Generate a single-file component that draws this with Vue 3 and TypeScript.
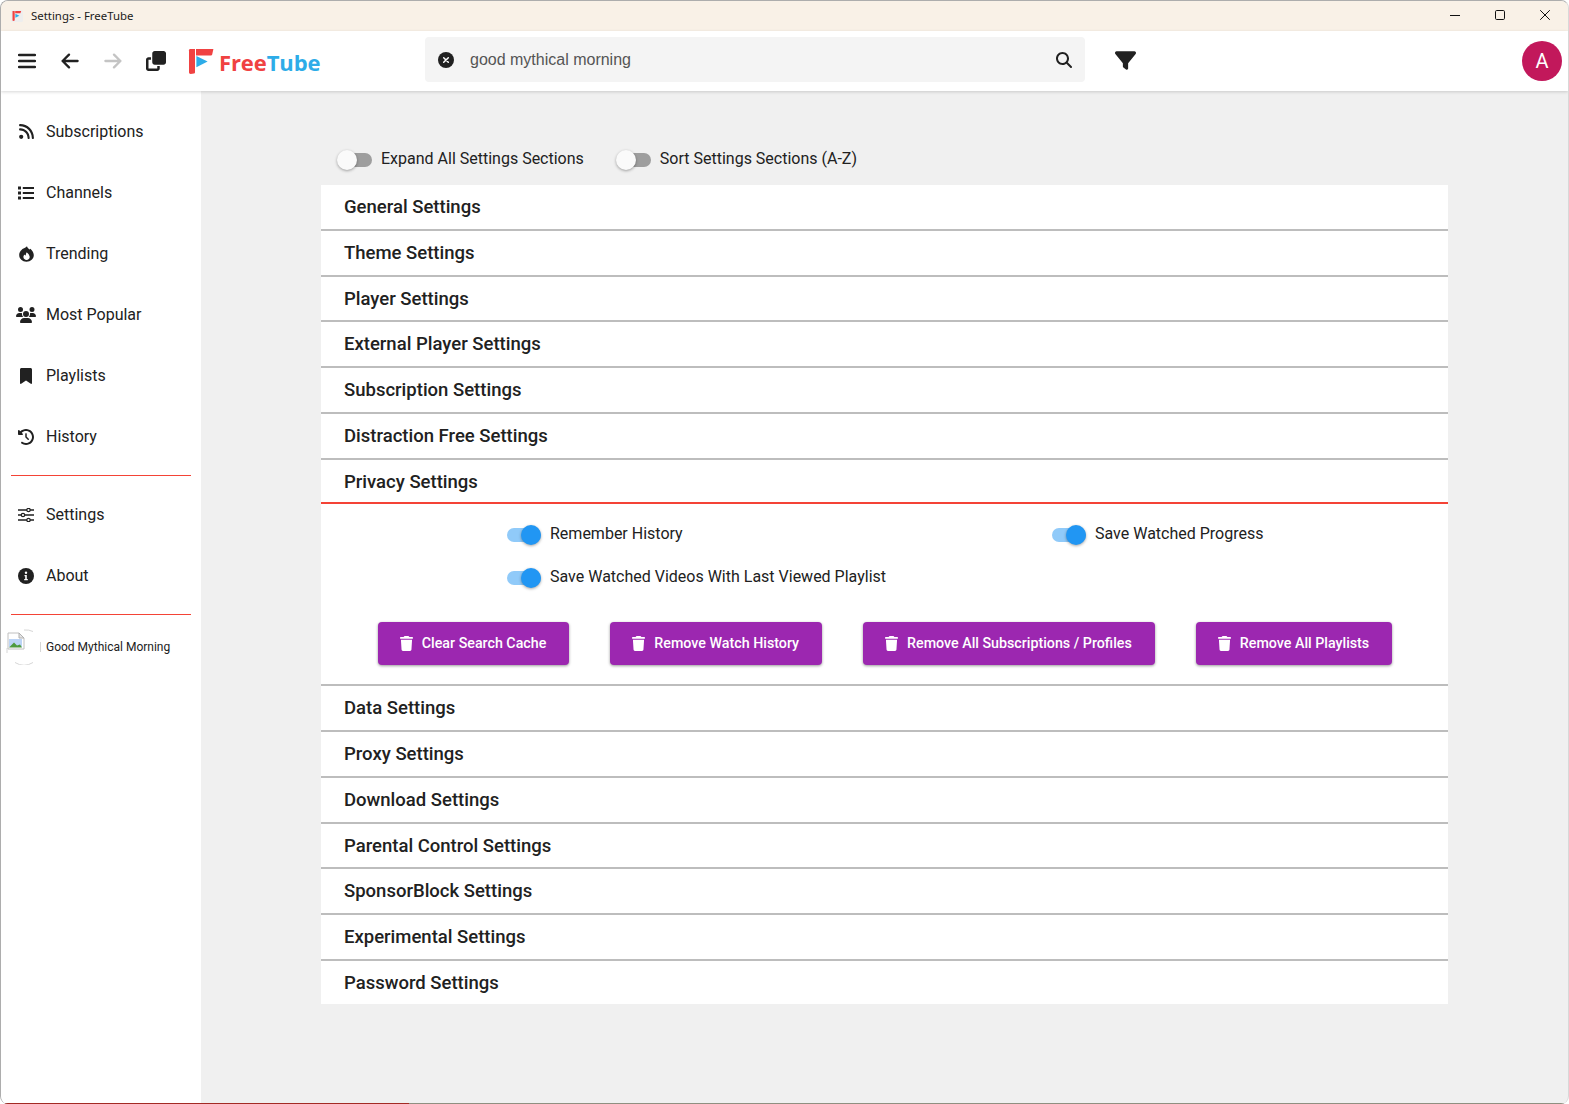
<script setup lang="ts">
const navTop = [
  { label: 'Subscriptions', icon: 'rss' },
  { label: 'Channels', icon: 'list' },
  { label: 'Trending', icon: 'fire' },
  { label: 'Most Popular', icon: 'users' },
  { label: 'Playlists', icon: 'bookmark' },
  { label: 'History', icon: 'history' },
]
const navBottom = [
  { label: 'Settings', icon: 'sliders' },
  { label: 'About', icon: 'info' },
]
const before = ['General Settings', 'Theme Settings', 'Player Settings', 'External Player Settings', 'Subscription Settings', 'Distraction Free Settings']
const after = ['Data Settings', 'Proxy Settings', 'Download Settings', 'Parental Control Settings', 'SponsorBlock Settings', 'Experimental Settings', 'Password Settings']
const buttons = ['Clear Search Cache', 'Remove Watch History', 'Remove All Subscriptions / Profiles', 'Remove All Playlists']
const trash = 'M135.2 17.7L128 32H32C14.3 32 0 46.3 0 64S14.3 96 32 96H416c17.7 0 32-14.3 32-32s-14.3-32-32-32H320l-7.2-14.3C307.4 6.8 296.3 0 284.2 0H163.8c-12.1 0-23.2 6.8-28.6 17.7zM416 128H32L53.2 467c1.6 25.3 22.6 45 47.9 45H346.9c25.3 0 46.3-19.7 47.9-45L416 128z'
</script>

<template>
  <div class="window">
    <header class="titlebar">
      <svg class="app-icon" viewBox="0 0 12 12">
        <rect x="0" y="0" width="12" height="12" rx="1.5" fill="#eeeeee" />
        <path d="M1.5 1h2.2v9.6l-1.4.4-.8-.6zM4.2 1h6l-.8 2.2H4.2z" fill="#f04242" />
        <path d="M4.4 3.800l4 2-4 2z" fill="#2dace8" />
      </svg>
      <span class="title">Settings - FreeTube</span>
      <div class="winctl">
        <svg viewBox="0 0 12 12"><path d="M1 6.500h10" stroke="#111" stroke-width="1" /></svg>
        <svg viewBox="0 0 12 12"><rect x="1.500" y="1.500" width="9" height="9" rx="1.200" fill="none" stroke="#111" stroke-width="1" /></svg>
        <svg viewBox="0 0 12 12"><path d="M1.200 1.200l9.600 9.600M10.800 1.200l-9.600 9.600" stroke="#111" stroke-width="1" /></svg>
      </div>
    </header>

    <div class="topbar">
      <div class="left-tools">
        <svg class="tool bars" viewBox="0 0 18 16"><path d="M1 2h16M1 8h16M1 14h16" stroke="#212121" stroke-width="2.500" stroke-linecap="round" /></svg>
        <svg class="tool arrow" viewBox="0 0 18 16"><path d="M1.600 8h15M8 1.600L1.600 8 8 14.400" fill="none" stroke="#212121" stroke-width="2.300" stroke-linecap="round" stroke-linejoin="round" /></svg>
        <svg class="tool arrow fwd" viewBox="0 0 18 16"><path d="M16.400 8h-15M10 1.600L16.400 8 10 14.400" fill="none" stroke="#c4c4c4" stroke-width="2.300" stroke-linecap="round" stroke-linejoin="round" /></svg>
        <svg class="tool clone" viewBox="0 0 512 512"><path fill="#212121" d="M288 448H64V224h64V160H64c-35.300 0-64 28.700-64 64V448c0 35.300 28.700 64 64 64H288c35.300 0 64-28.700 64-64V384H288v64zm-64-96H448c35.300 0 64-28.700 64-64V64c0-35.300-28.700-64-64-64H224c-35.300 0-64 28.700-64 64V288c0 35.300 28.700 64 64 64z" /></svg>
      </div>
      <div class="logo">
        <svg class="logo-mark" viewBox="0 0 26 26">
          <path d="M1 2.200Q1 1 2.200 1H7v23.400q-.2.8-1 1l-3.400.6Q1 26 1 24.600z" fill="#f04242" />
          <path d="M8 1h17.400l-1.200 5.600q-.2.8-1 .8H8z" fill="#f04242" />
          <path d="M8.400 8l11.200 5.600-11.200 5.600z" fill="#2dace8" />
        </svg>
        <span class="logo-text"><span class="free">Free</span><span class="tube">Tube</span></span>
      </div>
      <div class="search">
        <svg class="clear" viewBox="0 0 16 16"><circle cx="8" cy="8" r="8" fill="#212121" /><path d="M5.700 5.700l4.600 4.600M10.300 5.700l-4.600 4.600" stroke="#fff" stroke-width="1.500" stroke-linecap="round" /></svg>
        <span class="query">good mythical morning</span>
        <svg class="magnify" viewBox="0 0 512 512"><path fill="#212121" d="M416 208c0 45.900-14.900 88.300-40 122.700L502.600 457.400c12.500 12.500 12.500 32.800 0 45.300s-32.800 12.500-45.300 0L330.700 376c-34.400 25.200-76.800 40-122.700 40C93.100 416 0 322.900 0 208S93.100 0 208 0S416 93.100 416 208zM208 352a144 144 0 1 0 0-288 144 144 0 1 0 0 288z" /></svg>
      </div>
      <svg class="filter" viewBox="0 0 512 512"><path fill="#212121" d="M3.900 54.900C10.500 40.900 24.500 32 40 32H472c15.500 0 29.500 8.900 36.100 22.900s4.600 30.500-5.200 42.500L320 320.900V448c0 12.100-6.800 23.200-17.700 28.600s-23.800 4.300-33.500-3l-64-48c-8.100-6-12.800-15.500-12.800-25.600V320.900L9 97.300C-.7 85.400-2.800 68.800 3.900 54.900z" /></svg>
      <div class="avatar">A</div>
    </div>

    <div class="body">
      <aside class="sidebar">
        <template v-for="(group, gi) in [navTop, navBottom]" :key="gi">
          <div v-for="item in group" :key="item.label" class="nav-item">
            <span class="nav-icon">
              <svg v-if="item.icon === 'rss'" width="15" height="17" viewBox="0 0 448 512"><path fill="#212121" d="M0 64C0 46.300 14.300 32 32 32c229.800 0 416 186.200 416 416c0 17.700-14.300 32-32 32s-32-14.300-32-32C384 253.600 226.400 96 32 96C14.300 96 0 81.700 0 64zM0 416a64 64 0 1 1 128 0A64 64 0 1 1 0 416zM32 160c159.100 0 288 128.900 288 288c0 17.700-14.300 32-32 32s-32-14.300-32-32c0-123.700-100.300-224-224-224c-17.700 0-32-14.300-32-32s14.300-32 32-32z" /></svg>
              <svg v-else-if="item.icon === 'list'" width="16" height="14" viewBox="0 0 16 14"><path fill="#212121" d="M0 .5h3v3H0zM0 5.500h3v3H0zM0 10.500h3v3H0zM4.800 1h11.200v1.900H4.800zM4.800 6h11.200v1.900H4.800zM4.800 11h11.200v1.900H4.800z" /></svg>
              <svg v-else-if="item.icon === 'fire'" width="15" height="16" viewBox="0 0 15 16"><path fill="#212121" d="M8 .2c.3 1.500 1.300 2.300 2.500 3.300l.9-.8C13.400 4.500 14.800 7 14.800 9.100c0 3.800-3.200 6.700-7.300 6.700S.2 12.900.2 9.100C.2 6 2.500 3.200 5.600 2.100 6.400 1.500 7.300.9 8 .2z" /><path fill="#fff" d="M7.700 6.300c1 1.200 3 2.600 3 4.800 0 1.700-1.400 2.900-3.100 2.900s-3.200-1.200-3.200-2.900c0-1.100.6-2 1.300-2.600.2.500.5.900 1 1.100.1-1.200.4-2.300 1-3.300z" /></svg>
              <svg v-else-if="item.icon === 'users'" width="20" height="16" viewBox="0 0 640 512"><path fill="#212121" d="M144 0a80 80 0 1 1 0 160A80 80 0 1 1 144 0zM512 0a80 80 0 1 1 0 160A80 80 0 1 1 512 0zM0 298.700C0 239.800 47.800 192 106.700 192h42.700c15.900 0 31 3.500 44.600 9.700c-1.300 7.200-1.900 14.700-1.900 22.300c0 38.200 16.800 72.500 43.300 96c-.2 0-.4 0-.7 0H21.300C9.600 320 0 310.400 0 298.700zM405.300 320c-.2 0-.4 0-.7 0c26.600-23.500 43.300-57.800 43.300-96c0-7.600-.7-15-1.900-22.300c13.600-6.300 28.700-9.700 44.600-9.700h42.700C592.200 192 640 239.800 640 298.700c0 11.800-9.600 21.300-21.300 21.300H405.300zM224 224a96 96 0 1 1 192 0 96 96 0 1 1 -192 0zM128 485.300C128 411.700 187.700 352 261.300 352H378.700C452.300 352 512 411.700 512 485.300c0 14.700-11.900 26.700-26.700 26.700H154.700c-14.700 0-26.700-11.900-26.700-26.700z" /></svg>
              <svg v-else-if="item.icon === 'bookmark'" width="12" height="16" viewBox="0 0 384 512"><path fill="#212121" d="M0 48V487.700C0 501.100 10.900 512 24.300 512c5 0 9.900-1.500 14-4.400L192 400 345.700 507.600c4.100 2.900 9 4.400 14 4.400c13.400 0 24.300-10.900 24.300-24.300V48c0-26.500-21.500-48-48-48H48C21.500 0 0 21.500 0 48z" /></svg>
              <svg v-else-if="item.icon === 'history'" width="16" height="16" viewBox="0 0 512 512"><path fill="#212121" d="M75 75L41 41C25.900 25.900 0 36.600 0 57.900V168c0 13.300 10.700 24 24 24H134.100c21.400 0 32.100-25.900 17-41l-30.800-30.800C155 85.500 203 64 256 64c106 0 192 86 192 192s-86 192-192 192c-40.800 0-78.600-12.700-109.700-34.400c-14.500-10.100-34.400-6.600-44.600 7.900s-6.600 34.400 7.900 44.600C151.200 495 201.700 512 256 512c141.400 0 256-114.600 256-256S397.400 0 256 0C185.300 0 121.300 28.700 75 75zm181 53c-13.300 0-24 10.700-24 24V256c0 6.400 2.500 12.500 7 17l72 72c9.400 9.400 24.600 9.400 33.900 0s9.400-24.600 0-33.900l-65-65V152c0-13.300-10.700-24-24-24z" /></svg>
              <svg v-else-if="item.icon === 'sliders'" width="16" height="14" viewBox="0 0 16 14">
                <path d="M0 2h16M0 7h16M0 12h16" stroke="#212121" stroke-width="1.300" />
                <circle cx="10.500" cy="2" r="1.700" fill="#fff" stroke="#212121" stroke-width="1.200" />
                <circle cx="5" cy="7" r="1.700" fill="#fff" stroke="#212121" stroke-width="1.200" />
                <circle cx="10.500" cy="12" r="1.700" fill="#fff" stroke="#212121" stroke-width="1.200" />
              </svg>
              <svg v-else width="16" height="16" viewBox="0 0 16 16"><circle cx="8" cy="8" r="8" fill="#212121" /><circle cx="8" cy="4.700" r="1.200" fill="#fff" /><path d="M6.500 7h2.300v4h1v1.300h-3.600V11h1V8.300h-.7z" fill="#fff" /></svg>
            </span>
            <span class="nav-label">{{ item.label }}</span>
          </div>
          <hr class="divider" />
        </template>
        <div class="channel">
          <svg class="channel-thumb" width="36" height="36" viewBox="0 0 36 36">
            <path d="M18 1A17 17 0 0 1 27 2.500M34.500 13V23M27 33.500A17 17 0 0 1 9 33.500M1 19V24" fill="none" stroke="#d6d6d6" stroke-width="1" />
            <path d="M2 4h11l5 5v11H2z" fill="#fff" stroke="#c0c0c0" stroke-width="1" />
            <path d="M3 10h13v8H3z" fill="#bcd4f6" />
            <path d="M3 18.500l5-5 3 3 3-1 2 3z" fill="#4e9a3e" />
            <path d="M13 4v5h5z" fill="#e4e4e4" stroke="#b0b0b0" stroke-width="1" />
          </svg>
          <span class="channel-name">Good Mythical Morning</span>
        </div>
      </aside>

      <main class="main">
        <div class="content">
          <div class="global-toggles">
            <label class="toggle">
              <span class="switch"><span class="track"></span><span class="knob"></span></span>
              <span>Expand All Settings Sections</span>
            </label>
            <label class="toggle">
              <span class="switch"><span class="track"></span><span class="knob"></span></span>
              <span>Sort Settings Sections (A-Z)</span>
            </label>
          </div>

          <section class="panel">
            <h2 v-for="name in before" :key="name" class="row">{{ name }}</h2>
            <h2 class="row open">Privacy Settings</h2>
            <div class="privacy">
              <div class="switches">
                <label class="toggle on">
                  <span class="switch"><span class="track"></span><span class="knob"></span></span>
                  <span>Remember History</span>
                </label>
                <label class="toggle on">
                  <span class="switch"><span class="track"></span><span class="knob"></span></span>
                  <span>Save Watched Progress</span>
                </label>
                <label class="toggle on">
                  <span class="switch"><span class="track"></span><span class="knob"></span></span>
                  <span>Save Watched Videos With Last Viewed Playlist</span>
                </label>
              </div>
              <div class="actions">
                <button v-for="b in buttons" :key="b" class="danger" type="button">
                  <svg width="13" height="15" viewBox="0 0 448 512"><path fill="#fff" :d="trash" /></svg>
                  <span>{{ b }}</span>
                </button>
              </div>
            </div>
            <h2 v-for="name in after" :key="name" class="row lower">{{ name }}</h2>
          </section>
        </div>
      </main>
    </div>
  </div>
</template>

<style scoped>
.window {
  width: 1569px;
  height: 1104px;
  box-sizing: border-box;
  display: flex;
  flex-direction: column;
  overflow: hidden;
  position: relative;
  background: #f0f0f0;
  border: 1px solid #adadad;
  border-bottom: 0;
  border-right-color: #d8d8d8;
  border-radius: 8px;
  font-family: Roboto, "Liberation Sans", sans-serif;
  color: #212121;
}
.window::before {
  content: "";
  position: absolute;
  left: 0;
  right: 0;
  bottom: 0;
  height: 1px;
  background: #8f8f80;
  z-index: 3;
}
.window::after {
  content: "";
  position: absolute;
  left: 0;
  bottom: 0;
  width: 408px;
  height: 1px;
  background: #a32a24;
  z-index: 4;
}
.titlebar {
  height: 30px;
  flex: none;
  display: flex;
  align-items: center;
  background: #f9f1e7;
  padding-left: 10px;
  font-size: 12px;
  color: #1a1a1a;
}
.app-icon { width: 12px; height: 12px; margin-right: 8px; margin-top: -1px; }
.title { font-family: "Noto Sans", sans-serif; font-size: 11.4px; margin-top: -2px; }
.winctl { margin-left: auto; display: flex; gap: 33px; padding-right: 17px; }
.winctl svg { width: 12px; height: 12px; display: block; margin-top: -2px; }

.topbar {
  height: 60px;
  flex: none;
  display: flex;
  align-items: center;
  background: #fff;
  box-shadow: 0 1px 3px rgba(0, 0, 0, 0.16);
  position: relative;
  z-index: 2;
}
.left-tools { display: flex; align-items: center; margin-left: 17px; width: 170px; }
.tool { display: block; flex: none; }
.bars { width: 18px; height: 16px; margin-right: 25px; }
.arrow { width: 18px; height: 16px; margin-right: 25px; }
.clone { width: 20px; height: 20px; margin-top: -1px; margin-left: -1px; }
.logo { display: flex; align-items: center; width: 237px; margin-top: 1px; }
.logo-mark { width: 26px; height: 26px; margin-right: 5px; margin-top: -2px; }
.logo-text { font-family: "Open Sans", sans-serif; font-weight: 700; font-size: 22px; line-height: 1; margin-top: 1px; letter-spacing: -0.1px; }
.free { color: #f04242; }
.tube { color: #2dace8; }
.search {
  width: 660px;
  height: 45px;
  flex: none;
  box-sizing: border-box;
  background: #f4f4f4;
  border-radius: 4px;
  display: flex;
  align-items: center;
  padding: 0 13px;
  margin-top: -3px;
}
.clear { width: 16px; height: 16px; margin-right: 16px; flex: none; }
.query { font-family: "Liberation Sans", Arial, sans-serif; font-size: 16px; color: #555; flex: 1; }
.magnify { width: 16px; height: 16px; flex: none; }
.filter { width: 21px; height: 21px; margin-left: 30px; flex: none; margin-top: -2px; }
.avatar {
  width: 40px;
  height: 40px;
  margin-left: auto;
  margin-right: 6px;
  background: #c2185b;
  color: #fff;
  border-radius: 50%;
  display: flex;
  align-items: center;
  justify-content: center;
  font-size: 20px;
}

.body { flex: 1; display: flex; min-height: 0; }
.sidebar {
  width: 200px;
  flex: none;
  background: #fff;
  box-sizing: border-box;
  padding-top: 10px;
  border-bottom-left-radius: 7px;
}
.nav-item { height: 61px; display: flex; align-items: center; font-size: 16px; color: #212121; }
.nav-icon { width: 45px; flex: none; box-sizing: border-box; padding-left: 5px; display: flex; align-items: center; justify-content: center; }
.nav-label { line-height: 1; }
.divider { margin: 8px 10px; border: 0; border-top: 1px solid #f44336; height: 0; }
.channel { display: flex; align-items: center; margin-top: 13px; height: 38px; padding-left: 5px; }
.channel-thumb { flex: none; margin-right: 4px; }
.channel-name { font-size: 12px; color: #212121; }

.main { flex: 1; min-width: 0; padding-left: 120px; }
.content { width: 1127px; padding-top: 51px; }
.global-toggles { display: flex; gap: 32px; padding-left: 16px; height: 43px; box-sizing: border-box; padding-top: 7px; }
.toggle { display: flex; align-items: flex-start; font-size: 16px; color: #212121; line-height: 20px; }
.switch { position: relative; width: 35px; height: 20px; flex: none; margin-right: 9px; margin-top: 1px; }
.track { position: absolute; left: 1px; right: 0; top: 3px; height: 14px; border-radius: 7px; background: #9e9e9e; }
.knob {
  position: absolute;
  left: 0;
  top: 0;
  width: 20px;
  height: 20px;
  border-radius: 50%;
  background: #fafafa;
  box-shadow: 0 1px 3px rgba(0, 0, 0, 0.35);
}
.toggle.on .track { background: #90caf9; }
.toggle.on .knob { left: 15px; background: #2196f3; }

.panel { background: #fff; }
.row {
  margin: 0;
  height: 45.83px;
  box-sizing: border-box;
  padding: 0 0 0 23px;
  display: flex;
  align-items: center;
  font-size: 18.5px;
  font-weight: 500;
  color: #212121;
  border-bottom: 2px solid #bdbdbd;
}
.row.lower { height: 45.75px; }
.row:last-child { border-bottom: 0; height: 43.5px; padding-top: 1px; }
.row.open { height: 44.5px; padding-top: 2px; border-bottom-color: #f44336; }
.privacy { height: 182px; box-sizing: border-box; border-bottom: 2px solid #bdbdbd; padding-top: 20px; }
.switches {
  display: grid;
  grid-template-columns: 545px 1fr;
  row-gap: 22px;
  padding-left: 185px;
}
.actions { display: flex; justify-content: center; gap: 41px; margin-top: 33.5px; padding-left: 1px; }
.danger {
  height: 43px;
  box-sizing: border-box;
  border: 0;
  border-radius: 4px;
  background: #9c27b0;
  color: #fff;
  display: flex;
  align-items: center;
  gap: 9px;
  padding: 0 23px 0 22px;
  font-family: Roboto, sans-serif;
  font-size: 14.25px;
  font-weight: 500;
  box-shadow: 0 1px 3px rgba(0, 0, 0, 0.4);
}
</style>
